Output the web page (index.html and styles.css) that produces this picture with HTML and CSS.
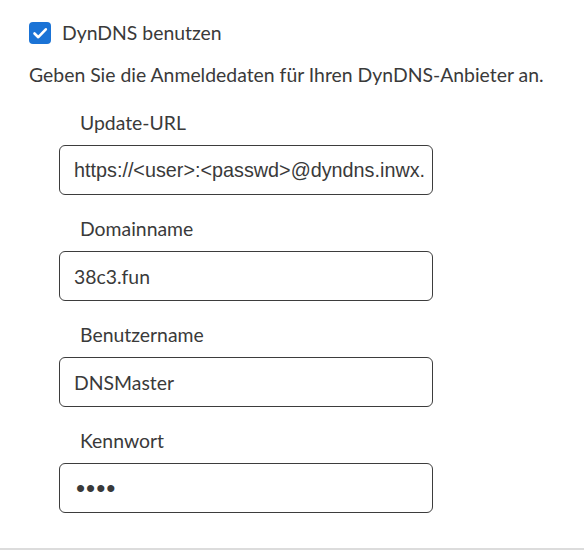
FILE: index.html
```html
<!DOCTYPE html>
<html lang="de">
<head>
<meta charset="utf-8">
<link rel="stylesheet" href="styles.css">
</head>
<body>
<div class="page">
  <label class="check-row">
    <span class="checkbox">
      <svg viewBox="0 0 22 22" width="22" height="22"><path d="M5.5 11.5 L9.3 15.2 L16.8 7.3" fill="none" stroke="#fff" stroke-width="2.6" stroke-linecap="round" stroke-linejoin="round"/></svg>
    </span>
    <span class="check-label">DynDNS benutzen</span>
  </label>
  <p class="desc">Geben Sie die Anmeldedaten für Ihren DynDNS-Anbieter an.</p>
  <div class="fields">
    <div class="field">
      <div class="label">Update-URL</div>
      <input class="input url" type="text" value="https://&lt;user&gt;:&lt;passwd&gt;@dyndns.inwx.com/nic/update">
    </div>
    <div class="field">
      <div class="label">Domainname</div>
      <input class="input" type="text" value="38c3.fun">
    </div>
    <div class="field">
      <div class="label">Benutzername</div>
      <input class="input" type="text" value="DNSMaster">
    </div>
    <div class="field">
      <div class="label">Kennwort</div>
      <input class="input pw" type="password" value="abcd">
    </div>
  </div>
</div>
<div class="rule"></div>
</body>
</html>
```
FILE: styles.css
```css
html, body {
  margin: 0;
  padding: 0;
  background: #fff;
}
body {
  width: 584px;
  height: 550px;
  position: relative;
  overflow: hidden;
  font-family: "Lato", "Noto Sans", sans-serif;
  color: #3a3a3a;
  font-size: 19.4px;
}
.page {
  padding: 22px 0 0 29px;
}
.check-row {
  display: flex;
  align-items: center;
  gap: 11px;
  height: 22px;
}
.checkbox {
  width: 22px;
  height: 22px;
  border-radius: 4px;
  background: #1a73d6;
  display: flex;
}
.check-label {
  line-height: 22px;
}
.desc {
  margin: 19px 0 0 0;
  line-height: 24px;
}
.fields {
  margin: 24px 0 0 30px;
  width: 374px;
  display: flex;
  flex-direction: column;
  gap: 22px;
}
.field {
  display: flex;
  flex-direction: column;
  gap: 10px;
}
.label {
  padding-left: 21px;
  line-height: 24px;
}
.input {
  box-sizing: border-box;
  width: 374px;
  height: 50px;
  margin: 0;
  border: 1px solid #3d3d3d;
  border-radius: 6px;
  padding: 0 8px 0 14px;
  font-family: "Lato", "Noto Sans", sans-serif;
  font-size: 19.4px;
  color: #3a3a3a;
  background: #fff;
  outline: none;
}
.input.url {
  font-family: "Liberation Sans", Arial, sans-serif;
  font-size: 19.8px;
}
.input.pw {
  font-family: "Liberation Sans", Arial, sans-serif;
  font-size: 26px;
  letter-spacing: 1px;
  padding-left: 16px;
}
.rule {
  position: absolute;
  left: 0;
  right: 0;
  top: 548px;
  height: 2px;
  background: #dcdcdc;
}
```
